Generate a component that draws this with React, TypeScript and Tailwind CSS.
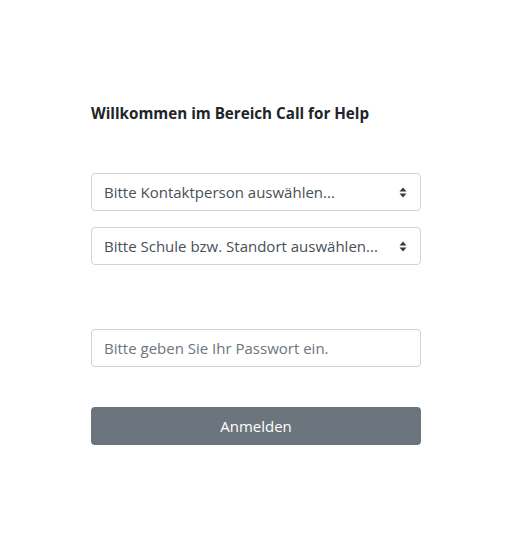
const Arrows = () => (
  <svg width="8" height="11" viewBox="0 0 8 11" className="shrink-0">
    <path d="M4 0.5 L7.5 4.5 H0.5 Z M4 10.5 L0.5 6.5 H7.5 Z" fill="#343a40" />
  </svg>
);

const SelectBox = ({ label }: { label: string }) => (
  <div className="flex h-[38px] w-full items-center justify-between gap-4 rounded-[4px] border border-[#ced4da] bg-white pl-[12px] pr-[13px] text-[15px] text-[#495057]">
    <span className="truncate">{label}</span>
    <Arrows />
  </div>
);

export default function App() {
  return (
    <div className="min-h-[559px] w-[520px] bg-white font-['Open_Sans',sans-serif]">
      <div className="ml-[91px] w-[330px] pt-[101px]">
        <h6 className="h-6 text-[15.2px] font-bold leading-6 text-[#212529]">
          Willkommen im Bereich Call for Help
        </h6>
        <div className="mt-[48px] flex flex-col gap-4">
          <SelectBox label="Bitte Kontaktperson auswählen..." />
          <SelectBox label="Bitte Schule bzw. Standort auswählen..." />
        </div>
        <div className="mt-[64px] flex h-[38px] items-center rounded-[4px] border border-[#ced4da] bg-white px-[12px] text-[15px] text-[#6c757d]">
          Bitte geben Sie Ihr Passwort ein.
        </div>
        <button className="mt-[40px] flex h-[38px] w-full items-center justify-center rounded-[4px] bg-[#6c757d] text-[15px] text-white">
          Anmelden
        </button>
      </div>
    </div>
  );
}
